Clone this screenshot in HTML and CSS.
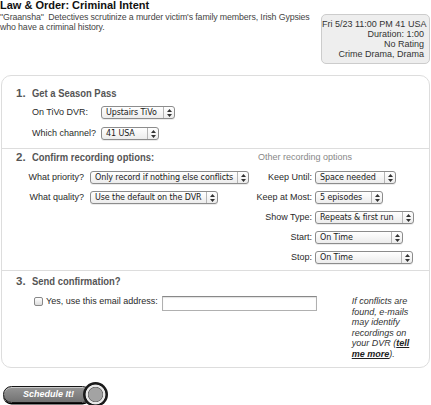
FILE: index.html
```html
<!DOCTYPE html>
<html>
<head>
<meta charset="utf-8">
<title>Season Pass</title>
<link rel="stylesheet" href="styles.css">
</head>
<body>
<div class="header">
  <div class="show">
    <h1 class="title">Law &amp; Order: Criminal Intent</h1>
    <p class="desc">"Graansha"&nbsp; Detectives scrutinize a murder victim's family members, Irish Gypsies<br>who have a criminal history.</p>
  </div>
  <div class="info">Fri 5/23 11:00 PM 41 USA<br>Duration: 1:00<br>No Rating<br>Crime Drama, Drama</div>
</div>

<div class="panel">
  <section class="sec sec1">
    <h2 class="heading"><span class="num">1.</span><span class="htext">Get a Season Pass</span></h2>
    <div class="grid1">
      <span class="lbl">On TiVo DVR:</span>
      <span class="sel w74"><span class="sel-text">Upstairs TiVo</span><span class="sel-arrows"><svg width="5" height="8" viewBox="0 0 5 8"><path d="M2.5 0L5 3H0z M2.5 8L5 5H0z" fill="#333"/></svg></span></span>
      <span class="lbl">Which channel?</span>
      <span class="sel w58"><span class="sel-text">41 USA</span><span class="sel-arrows"><svg width="5" height="8" viewBox="0 0 5 8"><path d="M2.5 0L5 3H0z M2.5 8L5 5H0z" fill="#333"/></svg></span></span>
    </div>
  </section>

  <section class="sec sec2">
    <div class="grid2">
      <h2 class="heading span-left"><span class="num">2.</span><span class="htext">Confirm recording options:</span></h2>
      <span class="other">Other recording options</span>

      <span class="lbl right">What priority?</span>
      <span class="sel w159 ml6"><span class="sel-text">Only record if nothing else conflicts</span><span class="sel-arrows"><svg width="5" height="8" viewBox="0 0 5 8"><path d="M2.5 0L5 3H0z M2.5 8L5 5H0z" fill="#333"/></svg></span></span>
      <span class="lbl right">Keep Until:</span>
      <span class="sel w81 ml3"><span class="sel-text">Space needed</span><span class="sel-arrows"><svg width="5" height="8" viewBox="0 0 5 8"><path d="M2.5 0L5 3H0z M2.5 8L5 5H0z" fill="#333"/></svg></span></span>

      <span class="lbl right">What quality?</span>
      <span class="sel w128 ml6"><span class="sel-text">Use the default on the DVR</span><span class="sel-arrows"><svg width="5" height="8" viewBox="0 0 5 8"><path d="M2.5 0L5 3H0z M2.5 8L5 5H0z" fill="#333"/></svg></span></span>
      <span class="lbl right">Keep at Most:</span>
      <span class="sel w68 ml3"><span class="sel-text">5 episodes</span><span class="sel-arrows"><svg width="5" height="8" viewBox="0 0 5 8"><path d="M2.5 0L5 3H0z M2.5 8L5 5H0z" fill="#333"/></svg></span></span>

      <span class="lbl right c3">Show Type:</span>
      <span class="sel w99 ml3"><span class="sel-text">Repeats &amp; first run</span><span class="sel-arrows"><svg width="5" height="8" viewBox="0 0 5 8"><path d="M2.5 0L5 3H0z M2.5 8L5 5H0z" fill="#333"/></svg></span></span>

      <span class="lbl right c3">Start:</span>
      <span class="sel w88 ml3"><span class="sel-text">On Time</span><span class="sel-arrows"><svg width="5" height="8" viewBox="0 0 5 8"><path d="M2.5 0L5 3H0z M2.5 8L5 5H0z" fill="#333"/></svg></span></span>

      <span class="lbl right c3">Stop:</span>
      <span class="sel w98 ml3"><span class="sel-text">On Time</span><span class="sel-arrows"><svg width="5" height="8" viewBox="0 0 5 8"><path d="M2.5 0L5 3H0z M2.5 8L5 5H0z" fill="#333"/></svg></span></span>
    </div>
  </section>

  <section class="sec sec3">
    <h2 class="heading"><span class="num">3.</span><span class="htext">Send confirmation?</span></h2>
    <div class="confirm">
      <span class="check"></span>
      <span class="lbl">Yes, use this email address:</span>
      <span class="email"></span>
      <p class="note">If conflicts are<br>found, e-mails<br>may identify<br>recordings on<br>your DVR (<a class="more">tell<br>me more</a>).</p>
    </div>
  </section>
</div>

<div class="sched">
  <span class="pill">Schedule It!</span>
  <span class="knob"></span>
</div>
</body>
</html>
```

FILE: styles.css
```css
* { box-sizing: border-box; }

body {
  margin: 0;
  width: 431px;
  font-family: "Liberation Sans", Arial, sans-serif;
  color: #333;
  background: #fff;
}

.header {
  display: flex;
  justify-content: space-between;
  align-items: flex-start;
}

.show {
  flex: 1 1 auto;
  min-width: 0;
}

.title {
  margin: 0;
  font-size: 11px;
  line-height: 11px;
  font-weight: bold;
  color: #111;
}

.desc {
  margin: 1px 0 0;
  font-size: 8.8px;
  line-height: 10px;
  letter-spacing: -0.12px;
  color: #444;
  white-space: nowrap;
}

.info {
  flex: none;
  margin: 14px 1px 0 0;
  width: 109px;
  padding: 4px 5px 4px 0;
  border: 1px solid #ccc;
  border-radius: 5px;
  background: #eee;
  font-size: 9px;
  line-height: 10px;
  text-align: right;
  color: #333;
  white-space: nowrap;
}

.panel {
  margin: 11px 1px 0;
  border: 1px solid #ddd;
  border-radius: 10px;
}

.sec + .sec { border-top: 1px solid #ddd; }

.heading {
  margin: 0;
  padding-left: 14px;
  font: bold 11.5px/14px "Liberation Sans", Arial, sans-serif;
  color: #555;
  white-space: nowrap;
}

.num {
  display: inline-block;
  width: 16px;
}

.htext {
  display: inline-block;
  transform: scaleX(0.82);
  transform-origin: left center;
}

.lbl {
  font-size: 9px;
  line-height: 11px;
  color: #2a2a2a;
  white-space: nowrap;
}

.right { justify-self: end; }

/* select-like control */
.sel {
  display: inline-flex;
  align-items: stretch;
  height: 13px;
  border: 1px solid #8c8c8c;
  border-radius: 3px;
  background: linear-gradient(#ffffff, #ececec);
  box-shadow: 0 1px 0 rgba(0,0,0,0.08);
  font: 8px/11px "DejaVu Sans", sans-serif;
  letter-spacing: -0.1px;
  color: #1a1a1a;
}

.sel-text {
  flex: 1;
  padding-left: 4px;
  white-space: nowrap;
  overflow: hidden;
}

.sel-arrows {
  flex: none;
  width: 11px;
  border-left: 1px solid #b5b5b5;
  display: flex;
  align-items: center;
  justify-content: center;
}

.w58 { width: 58px; }
.w68 { width: 68px; }
.w74 { width: 74px; }
.w81 { width: 81px; }
.w88 { width: 88px; }
.w98 { width: 98px; }
.w99 { width: 99px; }
.w128 { width: 128px; }
.w159 { width: 159px; }
.ml3 { margin-left: 3px; }
.ml6 { margin-left: 6px; }

/* section 1 */
.sec1 { padding: 10px 0 8px; }

.grid1 {
  display: grid;
  grid-template-columns: 69px auto;
  row-gap: 8px;
  padding-left: 30px;
  margin-top: 6px;
  align-items: center;
  justify-items: start;
}

/* section 2 */
.sec2 { padding: 1px 0 6px; }

.grid2 {
  display: grid;
  grid-template-columns: 82px 165px 63px auto;
  row-gap: 7px;
  align-items: center;
  justify-items: start;
}

.span-left { grid-column: 1 / 3; }

.other {
  grid-column: 3 / 5;
  padding-left: 9px;
  font-size: 9px;
  line-height: 14px;
  color: #888;
}

.c3 { grid-column: 3; }

/* section 3 */
.sec3 { padding: 3px 0 8px; }

.confirm {
  display: flex;
  align-items: flex-start;
  margin-top: 8px;
  padding-left: 32px;
}

.check {
  flex: none;
  width: 9px;
  height: 9px;
  margin-top: 1px;
  margin-right: 3px;
  border: 1px solid #888;
  border-radius: 2px;
  background: linear-gradient(#fff, #ddd);
}

.confirm .lbl { line-height: 10px; }

.email {
  flex: none;
  width: 155px;
  height: 15px;
  margin-left: 4px;
  border: 1px solid #b0b0b0;
  border-top-color: #888;
  box-shadow: inset 0 1px 1px rgba(0,0,0,0.12);
  background: #fff;
}

.note {
  margin: 0 0 0 35px;
  font-size: 9px;
  line-height: 10.5px;
  font-style: italic;
  color: #333;
  white-space: nowrap;
}

.more {
  color: #222;
  font-weight: bold;
  text-decoration: underline;
}

/* button */
.sched {
  display: flex;
  align-items: center;
  margin: 14px 0 0 3px;
}

.pill {
  width: 88px;
  height: 17px;
  padding-left: 19px;
  border: 1.5px solid #151515;
  border-radius: 9px;
  background: linear-gradient(#969696, #727272);
  box-shadow: 0 1.5px 0 #000, inset 0 1px 0 rgba(255,255,255,0.5);
  color: #fff;
  font: italic bold 9px/14px "Liberation Sans", Arial, sans-serif;
  white-space: nowrap;
}

.knob {
  width: 25px;
  height: 25px;
  margin-left: -8px;
  border-radius: 50%;
  background: radial-gradient(circle closest-side, #a3a3a3 0 6.5px, #6a6a6a 7.3px, #e8e8e8 8px 9.5px, #1a1a1a 10.3px);
}
```
